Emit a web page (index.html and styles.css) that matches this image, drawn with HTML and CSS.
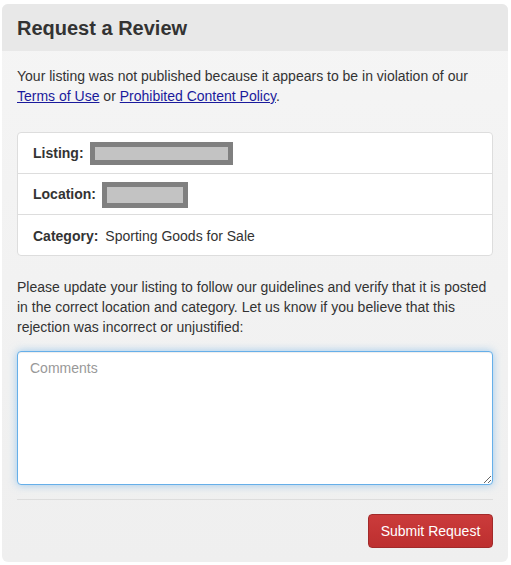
FILE: index.html
```html
<!DOCTYPE html>
<html>
<head>
<meta charset="utf-8">
<link rel="stylesheet" href="styles.css">
</head>
<body>
<div class="panel">
  <div class="panel-heading"><h1 class="title">Request a Review</h1></div>
  <div class="panel-body">
    <p class="intro">Your listing was not published because it appears to be in violation of our <a href="#">Terms of Use</a> or <a href="#">Prohibited Content Policy</a>.</p>
    <div class="details">
      <div class="row"><span class="label">Listing:</span><span class="redact redact-listing"></span></div>
      <div class="row"><span class="label">Location:</span><span class="redact redact-location"></span></div>
      <div class="row row-last"><span class="label">Category:</span><span class="value">Sporting Goods for Sale</span></div>
    </div>
    <p class="update">Please update your listing to follow our guidelines and verify that it is posted in the correct location and category. Let us know if you believe that this rejection was incorrect or unjustified:</p>
    <textarea class="comments" placeholder="Comments"></textarea>
    <hr class="divider">
    <div class="actions"><button class="btn-submit">Submit Request</button></div>
  </div>
</div>
</body>
</html>
```
FILE: styles.css
```css
html, body {
  margin: 0;
  padding: 0;
  background: #ffffff;
}
body {
  font-family: "Liberation Sans", Arial, sans-serif;
  font-size: 14px;
  line-height: 20px;
  color: #333333;
}
.panel {
  margin: 4px 3px 3px 2px;
  width: 506px;
  height: 558px;
  border-radius: 6px;
  overflow: hidden;
  background: linear-gradient(#f5f5f5, #efefef);
  display: flex;
  flex-direction: column;
}
.panel-heading {
  background: #e8e8e8;
  padding: 11px 15px 9px 15px;
  height: 27px;
}
.title {
  margin: 0;
  font-size: 20px;
  line-height: 27px;
  font-weight: bold;
  color: #333;
}
.panel-body {
  padding: 15px 15px 15px 15px;
  display: flex;
  flex-direction: column;
}
.intro {
  margin: 0 0 26px 0;
}
a {
  color: #1a1a9c;
  text-decoration: underline;
}
.details {
  background: #ffffff;
  border: 1px solid #dddddd;
  border-radius: 4px;
}
.row {
  display: flex;
  align-items: center;
  height: 40px;
  padding: 0 15px;
  border-top: 1px solid #dddddd;
}
.row:first-child {
  border-top: none;
}
.row-last {
  padding-top: 2px;
  height: 38px;
}
.label {
  font-weight: bold;
  margin-right: 6px;
}
.value {
  margin-left: 1px;
}
.redact {
  display: inline-block;
  box-sizing: border-box;
  background: #c3c3c3;
  border: 5px solid #808080;
}
.redact-listing {
  width: 143px;
  height: 23px;
  margin-top: 1px;
}
.redact-location {
  width: 86px;
  height: 26px;
  margin-top: 2px;
}
.update {
  margin: 21px 0 14px 0;
}
.comments {
  display: block;
  box-sizing: border-box;
  width: 476px;
  height: 134px;
  margin: 0;
  padding: 6px 12px;
  font-family: "Liberation Sans", Arial, sans-serif;
  font-size: 14px;
  line-height: 20px;
  color: #555;
  background: #fff;
  border: 1px solid #66afe9;
  border-radius: 4px;
  outline: none;
  box-shadow: inset 0 1px 1px rgba(0,0,0,.075), 0 0 8px rgba(102,175,233,.6);
  resize: vertical;
}
.comments::placeholder {
  color: #999999;
}
.divider {
  margin: 14px 0 14px 0;
  border: 0;
  border-top: 1px solid #dddddd;
  height: 0;
}
.actions {
  display: flex;
  justify-content: flex-end;
}
.btn-submit {
  box-sizing: border-box;
  height: 34px;
  width: 125px;
  padding: 6px 0;
  white-space: nowrap;
  text-align: center;
  font-family: "Liberation Sans", Arial, sans-serif;
  font-size: 14px;
  line-height: 20px;
  color: #ffffff;
  background: linear-gradient(#cb3b3b, #bd2f2f);
  border: 1px solid #a22a2a;
  border-radius: 4px;
}
```
